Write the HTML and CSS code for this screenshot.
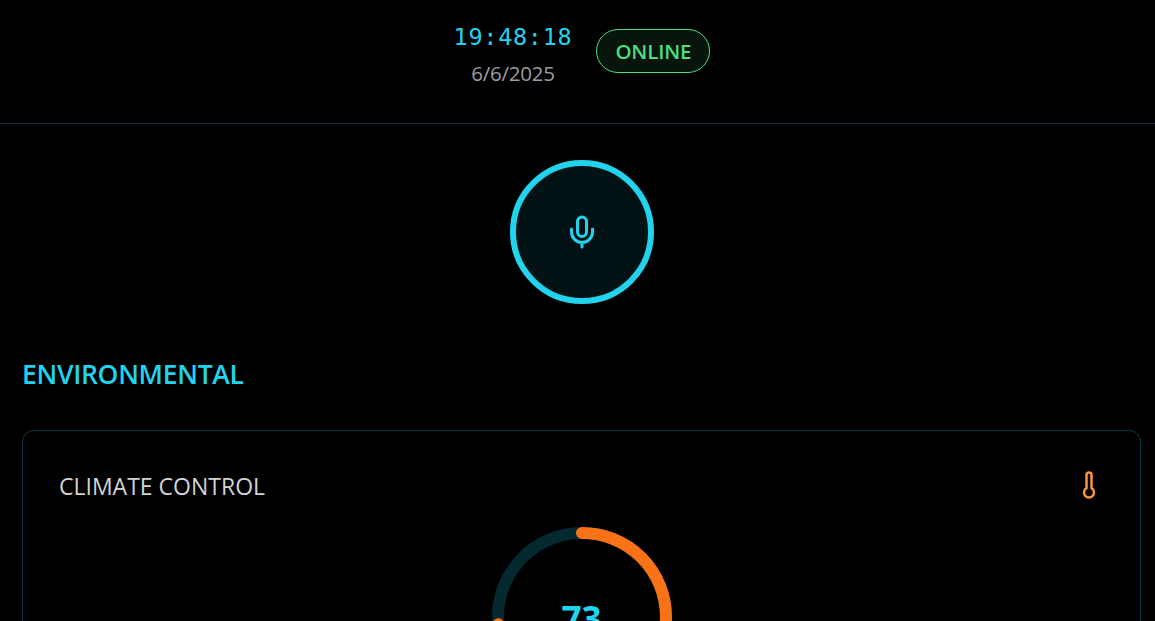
FILE: index.html
```
<!DOCTYPE html>
<html lang="en">

<head>
	<meta charset="UTF-8">
	<meta name="viewport" content="width=device-width, initial-scale=1.0">
	<title>Dashboard</title>
	<link rel="stylesheet" href="styles.css">
</head>

<body>
	<header class="header">
		<div class="clock">
			<div class="time">19:48:18</div>
			<div class="date">6/6/2025</div>
		</div>
		<div class="status">ONLINE</div>
	</header>

	<main class="main">
		<button class="mic" aria-label="Microphone">
			<svg class="mic-icon" viewBox="0 0 24 24">
				<rect x="9" y="2" width="6" height="13" rx="3" />
				<path d="M19 10v2a7 7 0 0 1-14 0v-2M12 19v3" />
			</svg>
		</button>

		<h2 class="section-title">ENVIRONMENTAL</h2>

		<section class="card">
			<div class="card-header">
				<h3 class="card-title">CLIMATE CONTROL</h3>
				<svg class="thermo-icon" viewBox="0 0 24 24">
					<path d="M14 4v10.54a4 4 0 1 1-4 0V4a2 2 0 0 1 4 0Z" />
				</svg>
			</div>
			<div class="gauge">
				<svg class="gauge-ring" viewBox="0 0 192 192">
					<circle class="gauge-track" cx="96" cy="96" r="84" />
					<circle class="gauge-fill" cx="96" cy="96" r="84" pathLength="100" transform="rotate(-90 96 96)" />
				</svg>
				<span class="gauge-value">73</span>
			</div>
		</section>
	</main>
</body>

</html>
```

FILE: styles.css
```
* {
	margin: 0;
	padding: 0;
	box-sizing: border-box;
}

body {
	height: 100vh;
	overflow: hidden;
	background: #000;
	font-family: "Open Sans", "Noto Sans", sans-serif;
}

.header {
	display: flex;
	justify-content: center;
	align-items: flex-start;
	gap: 24px;
	height: 124px;
	padding: 18px 0 0 9px;
	border-bottom: 1px solid #083644;
}

.clock {
	text-align: center;
}

.time {
	font-family: "DejaVu Sans Mono", monospace;
	font-size: 23.5px;
	line-height: 38px;
	letter-spacing: 0.7px;
	color: #22d3ee;
}

.date {
	font-size: 20.5px;
	line-height: 34px;
	letter-spacing: -0.25px;
	color: #9b9ca1;
}

.status {
	width: 114px;
	height: 44px;
	margin-top: 11px;
	border: 1px solid #4ade80;
	border-radius: 22px;
	background: #07150d;
	font-size: 20.5px;
	font-weight: 600;
	line-height: 43px;
	letter-spacing: -0.2px;
	text-align: center;
	color: #4ade80;
}

.main {
	display: flex;
	flex-direction: column;
	padding: 36px 14px 0 22px;
}

.mic {
	display: flex;
	justify-content: center;
	align-items: center;
	align-self: center;
	width: 144px;
	height: 144px;
	border: 6px solid #22d3ee;
	border-radius: 50%;
	background: #021215;
}

.mic-icon,
.thermo-icon {
	fill: none;
	stroke-width: 2;
	stroke-linecap: round;
	stroke-linejoin: round;
}

.mic-icon {
	width: 36px;
	height: 36px;
	stroke: #22d3ee;
}

.section-title {
	margin-top: 50px;
	font-size: 26.5px;
	font-weight: 600;
	line-height: 40px;
	letter-spacing: -0.3px;
	color: #22d3ee;
}

.card {
	height: 500px;
	margin-top: 36px;
	padding: 36px;
	border: 1px solid #083a42;
	border-radius: 12px;
}

.card-header {
	display: flex;
	justify-content: space-between;
	align-items: center;
	height: 36px;
}

.card-title {
	padding-top: 2px;
	font-size: 23px;
	font-weight: 400;
	line-height: 36px;
	color: #d1d3d6;
}

.thermo-icon {
	width: 30px;
	height: 30px;
	stroke: #fb923c;
}

.gauge {
	display: grid;
	place-items: center;
	width: 192px;
	height: 192px;
	margin: 18px auto 0;
}

.gauge-ring,
.gauge-value {
	grid-area: 1 / 1;
}

.gauge-ring {
	width: 192px;
	height: 192px;
}

.gauge-track,
.gauge-fill {
	fill: none;
	stroke-width: 12;
}

.gauge-track {
	stroke: #04292f;
}

.gauge-fill {
	stroke: #f97316;
	stroke-linecap: round;
	stroke-dasharray: 73.6 100;
}

.gauge-value {
	padding-top: 4px;
	font-size: 35px;
	font-weight: 700;
	line-height: 48px;
	color: #22d3ee;
}
```
